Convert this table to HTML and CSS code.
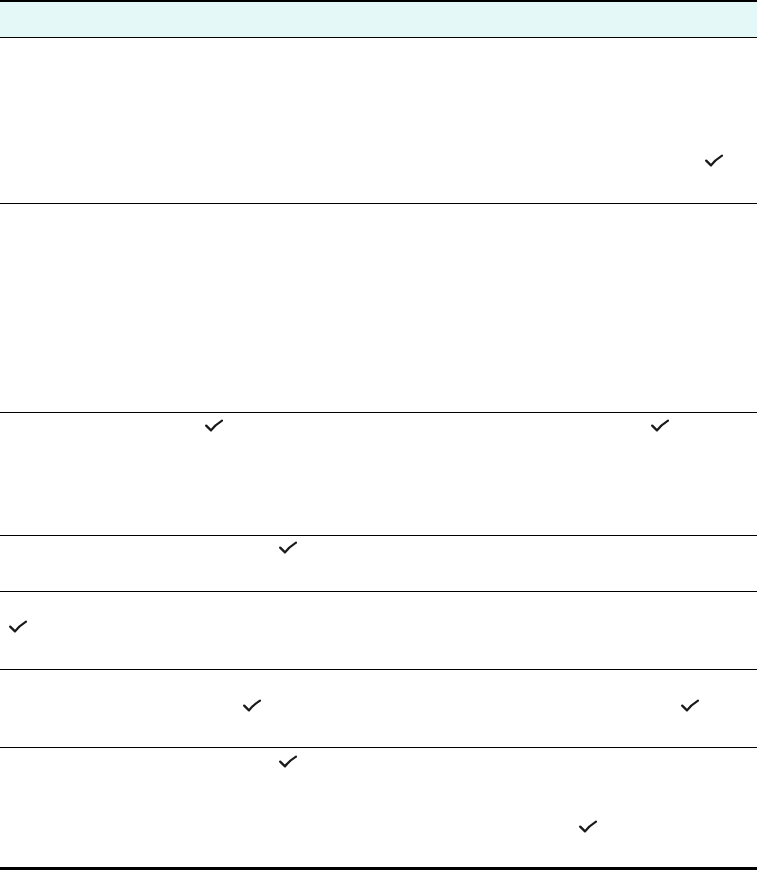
FILE: index.html
```html
<!DOCTYPE html>
<html>
<head>
<meta charset="utf-8">
<link rel="stylesheet" href="styles.css">
</head>
<body>
<svg class="defs" width="0" height="0">
  <defs>
    <symbol id="ck" viewBox="0 0 18 13">
      <path d="M1.2 6.6 L6 11.4 Q10 6 17 1.6" fill="none" stroke="#1a1a1a" stroke-width="2.3" stroke-linecap="round" stroke-linejoin="round"/>
    </symbol>
  </defs>
</svg>
<div class="table">
  <div class="head"></div>
  <div class="row r1"><div class="line"><svg class="check x705"><use href="#ck"/></svg></div></div>
  <div class="row r2"></div>
  <div class="row r3"><div class="line"><svg class="check x205"><use href="#ck"/></svg><svg class="check x651b"><use href="#ck"/></svg></div></div>
  <div class="row r4"><div class="line"><svg class="check x279"><use href="#ck"/></svg></div></div>
  <div class="row r5"><div class="line"><svg class="check x9"><use href="#ck"/></svg></div></div>
  <div class="row r6"><div class="line"><svg class="check x243"><use href="#ck"/></svg><svg class="check x681b"><use href="#ck"/></svg></div></div>
  <div class="row r7">
    <div class="line"><svg class="check x279"><use href="#ck"/></svg></div>
    <div class="line gap52"><svg class="check x579"><use href="#ck"/></svg></div>
  </div>
</div>
</body>
</html>
```
FILE: styles.css
```css
html, body { margin: 0; padding: 0; background: #fff; font-family: "Liberation Sans", Arial, sans-serif; }
.defs { position: absolute; width: 0; height: 0; overflow: hidden; }
.table { width: 757px; display: flex; flex-direction: column; }
.head { box-sizing: border-box; height: 38px; background: #e3f8f7; border-top: 2px solid #000; border-bottom: 1px solid #000; }
.row { box-sizing: border-box; border-bottom: 1px solid #000; display: flex; flex-direction: column; }
.line { display: flex; }
.check { display: block; width: 18px; height: 13px; flex: none; }
.r1 { height: 166px; padding-top: 116px; }
.r2 { height: 209px; }
.r3 { height: 123px; padding-top: 6px; }
.r4 { height: 56px; padding-top: 5px; }
.r5 { height: 78px; padding-top: 28px; }
.r6 { height: 78px; padding-top: 29px; }
.r7 { height: 122px; padding-top: 7px; border-bottom-width: 3px; }
.gap52 { margin-top: 52px; }
.x9 { margin-left: 9px; }
.x205 { margin-left: 205px; }
.x243 { margin-left: 243px; }
.x279 { margin-left: 279px; }
.x579 { margin-left: 579px; }
.x705 { margin-left: 705px; }
.x651b { margin-left: 428px; }
.x681b { margin-left: 420px; }
```
